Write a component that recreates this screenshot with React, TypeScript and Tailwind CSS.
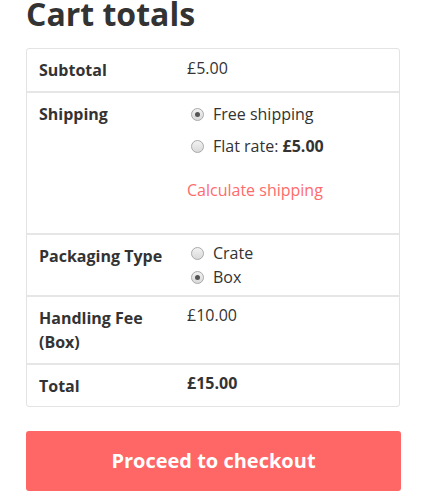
import React from "react";

function Radio({ checked }: { checked?: boolean }) {
  return (
    <span className="ml-[4px] mr-[9px] inline-flex h-[13px] w-[13px] shrink-0 items-center justify-center rounded-full border border-[#a9a9a9] bg-gradient-to-b from-[#f2f2f2] to-[#d9d9d9]">
      {checked ? <span className="block h-[5px] w-[5px] rounded-full bg-[#555]" /> : null}
    </span>
  );
}

export default function App() {
  return (
    <div className="w-[427px] h-[498px] overflow-hidden bg-white font-['Open_Sans',sans-serif] text-[#333]">
      <div className="ml-[26px] w-[375px]">
        <h2 className="text-[32px] leading-[28px] font-bold text-[#333]">Cart totals</h2>
        <div className="mt-[20px] w-[374px] rounded-[3px] border border-[#e3e3e3] text-[16px] leading-[24px]">
          {/* Subtotal */}
          <div className="grid h-[42px] grid-cols-[160px_1fr]">
            <div className="pl-[12px] pt-[9px] font-bold">Subtotal</div>
            <div className="pt-[7px]">£5.00</div>
          </div>
          {/* Shipping */}
          <div className="grid h-[142px] grid-cols-[160px_1fr] border-t-2 border-[#e6e6e6]">
            <div className="pl-[12px] pt-[9px] font-bold">Shipping</div>
            <div className="pt-[9px]">
              <div className="flex items-center">
                <Radio checked />
                <span>Free shipping</span>
              </div>
              <div className="mt-[8px] flex items-center">
                <Radio />
                <span>
                  Flat rate: <span className="font-bold">£5.00</span>
                </span>
              </div>
              <div className="mt-[20px] text-[#ff6b6b]">Calculate shipping</div>
            </div>
          </div>
          {/* Packaging */}
          <div className="grid h-[62px] grid-cols-[160px_1fr] border-t-2 border-[#e6e6e6]">
            <div className="pl-[12px] pt-[9px] font-bold">Packaging Type</div>
            <div className="pt-[6px]">
              <div className="flex items-center">
                <Radio />
                <span>Crate</span>
              </div>
              <div className="flex items-center">
                <Radio checked />
                <span>Box</span>
              </div>
            </div>
          </div>
          {/* Handling fee */}
          <div className="grid h-[68px] grid-cols-[160px_1fr] border-t-2 border-[#e6e6e6]">
            <div className="pl-[12px] pt-[9px] font-bold">
              Handling Fee
              <br />
              (Box)
            </div>
            <div className="pt-[6px]">£10.00</div>
          </div>
          {/* Total */}
          <div className="grid h-[43px] grid-cols-[160px_1fr] border-t-2 border-[#e6e6e6]">
            <div className="pl-[12px] pt-[9px] font-bold">Total</div>
            <div className="pt-[6px] font-bold">£15.00</div>
          </div>
        </div>
        <button className="mt-[24px] flex h-[60px] w-[375px] items-center justify-center rounded-[3px] bg-[#ff6666] text-[20px] font-bold text-white">
          Proceed to checkout
        </button>
      </div>
    </div>
  );
}
